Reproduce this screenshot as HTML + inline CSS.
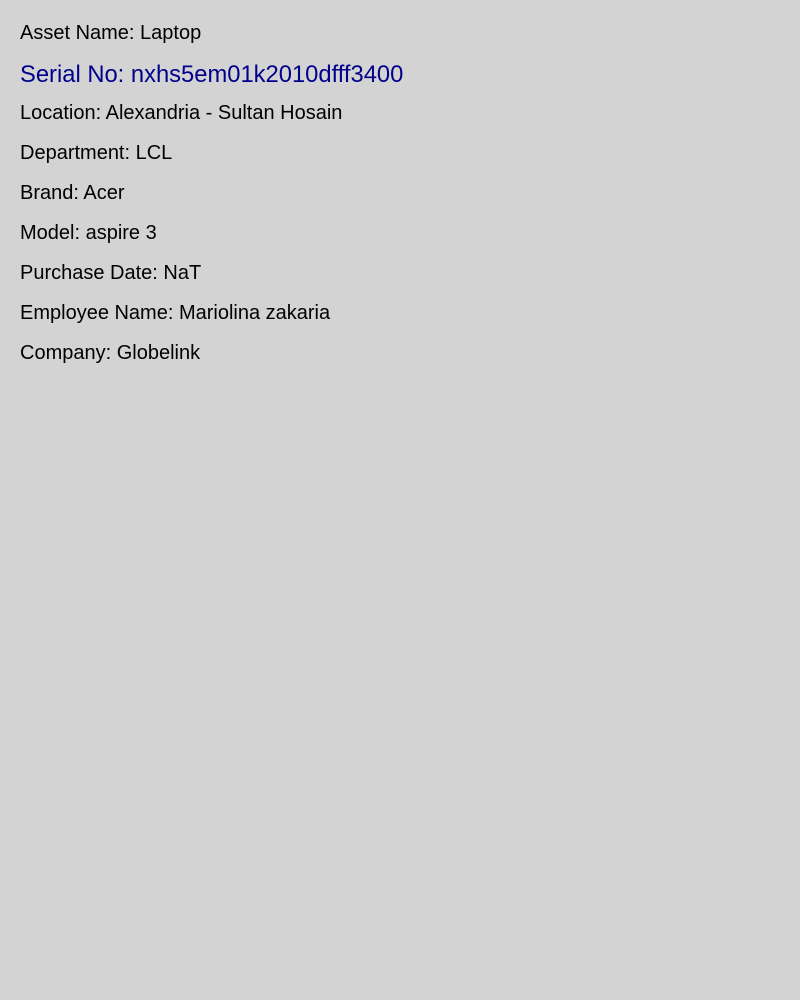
<!DOCTYPE html>
<html><head><style>
body{margin:0;background:#d3d3d3;font-family:"Liberation Sans",Arial,sans-serif;width:800px;height:1000px;}
p{margin:0;font-size:20px;line-height:24px;color:#000;position:absolute;left:20px;}
.s{font-size:23.75px;color:#00008b;line-height:28px;}
</style></head><body>
<p style="top:21px">Asset Name: Laptop</p>
<p class="s" style="top:61px">Serial No: nxhs5em01k2010dfff3400</p>
<p style="top:101px">Location: Alexandria - Sultan Hosain</p>
<p style="top:141px">Department: LCL</p>
<p style="top:181px">Brand: Acer</p>
<p style="top:221px">Model: aspire 3</p>
<p style="top:261px">Purchase Date: NaT</p>
<p style="top:301px">Employee Name: Mariolina zakaria</p>
<p style="top:341px">Company: Globelink</p>
</body></html>
